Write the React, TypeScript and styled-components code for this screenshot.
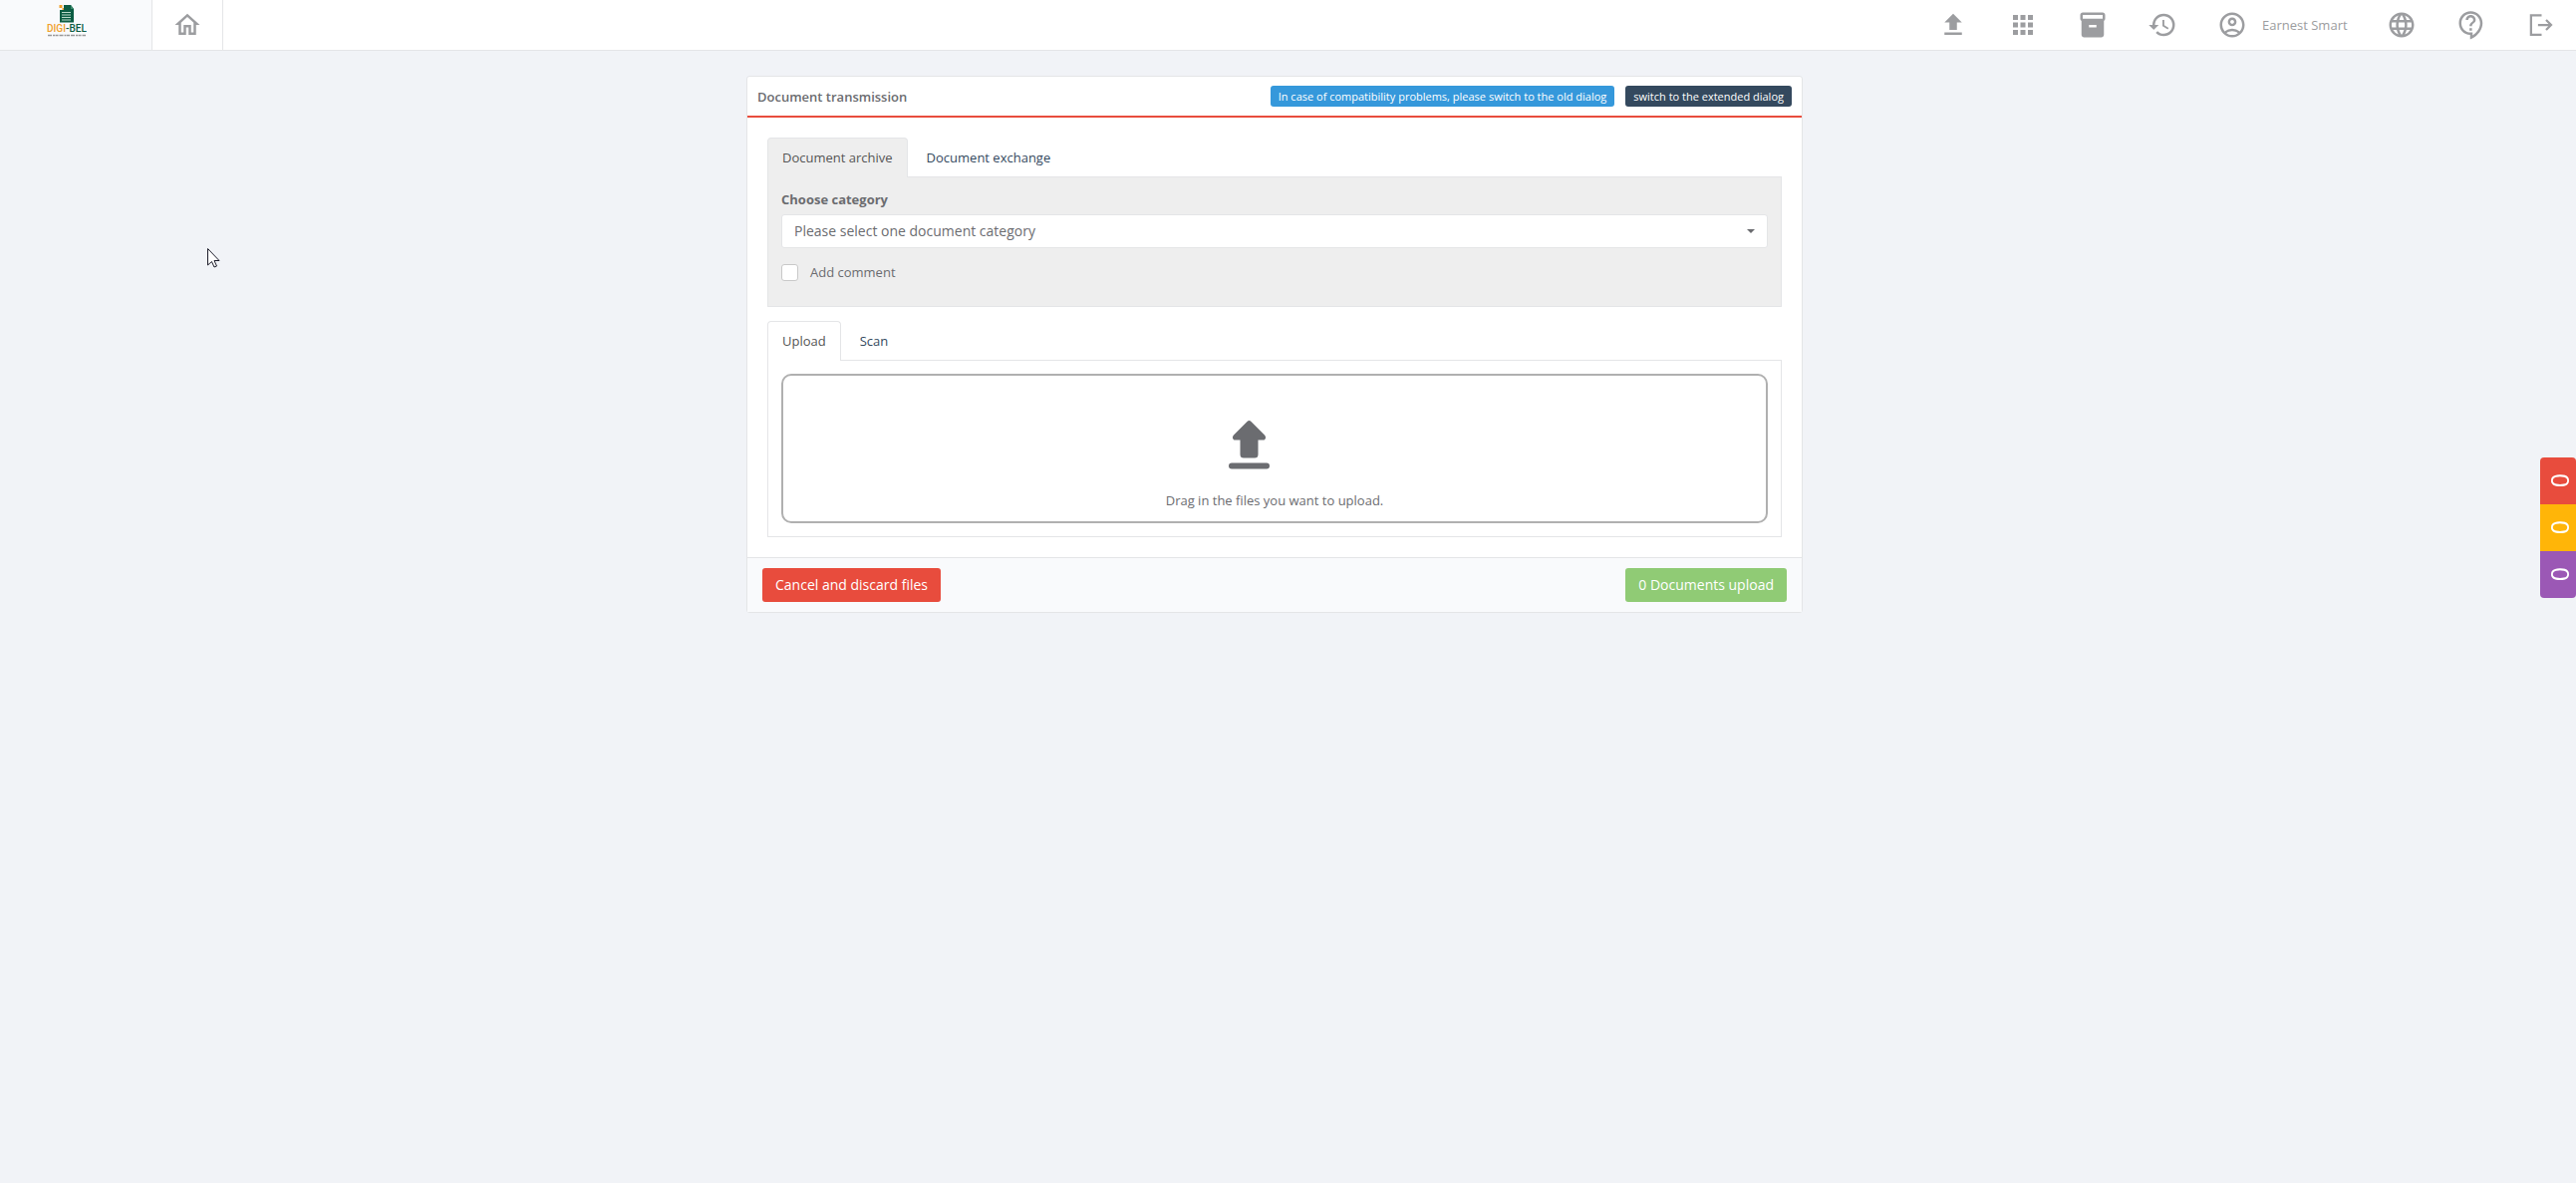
import React, { useState } from "react";
import styled, { createGlobalStyle, css } from "styled-components";
import {
  MdOutlineHome,
  MdUpload,
  MdApps,
  MdInventory2,
  MdHistory,
  MdOutlineAccountCircle,
  MdLanguage,
  MdOutlineContactSupport,
} from "react-icons/md";

const GlobalStyle = createGlobalStyle`
  *, *::before, *::after { box-sizing: border-box; }
  body {
    margin: 0;
    min-height: 100vh;
    background: #f1f3f7;
    color: #6b6c70;
    font: 13px/20px "Open Sans", "Noto Sans", sans-serif;
  }
  button, input, select { font: inherit; color: inherit; }
`;

const line = "#e4e5e7";

const TopBar = styled.header`
  display: flex;
  justify-content: space-between;
  height: 51px;
  background: #fff;
  border-bottom: 1px solid ${line};
`;

const BarGroup = styled.nav`
  display: flex;
`;

const LogoLink = styled.a`
  display: flex;
  justify-content: center;
  width: 153px;
  padding-right: 18px;
  background: #f9fafc;
  border-right: 1px solid ${line};
`;

const BarButton = styled.button<{ $divided?: boolean; $wide?: boolean }>`
  display: flex;
  align-items: center;
  gap: 15px;
  width: ${(p) => (p.$wide ? 170 : p.$divided ? 71 : 70)}px;
  padding: 0 20px;
  border: 0;
  border-right: ${(p) => (p.$divided ? `1px solid ${line}` : "0")};
  background: none;
  color: #9c9da0;
  white-space: nowrap;
  cursor: pointer;

  svg {
    flex: none;
    width: 30px;
    height: 30px;
  }
`;

const Main = styled.main`
  display: flex;
  justify-content: center;
  padding: 25px 27px 25px 0;
`;

const Card = styled.section`
  width: 100%;
  max-width: 1060px;
  background: #fff;
  border: 1px solid ${line};
  border-radius: 3px;
`;

const CardHeader = styled.header`
  display: flex;
  align-items: center;
  justify-content: space-between;
  height: 41px;
  padding: 0 10px;
  border-bottom: 2px solid #e84c3d;
`;

const Title = styled.h1`
  margin: 0;
  font-size: 13px;
  font-weight: 600;
`;

const HeaderActions = styled.div`
  display: flex;
  gap: 11px;
`;

const SmallButton = styled.button<{ $color: string }>`
  height: 21px;
  padding: 0 8px;
  border: 0;
  border-radius: 3px;
  background: ${(p) => p.$color};
  color: #fff;
  font-size: 11px;
  line-height: 20px;
  cursor: pointer;
`;

const CardBody = styled.div`
  display: flex;
  flex-direction: column;
  gap: 14px;
  padding: 20px;
`;

const TabList = styled.div`
  display: flex;
  gap: 4px;
`;

const Tab = styled.button<{ $active: boolean; $fill: string }>`
  height: 40px;
  margin-bottom: -1px;
  padding: 0 14px 2px;
  border: 1px solid transparent;
  border-bottom: 0;
  border-radius: 4px 4px 0 0;
  background: none;
  color: #34495e;
  cursor: pointer;

  ${(p) =>
    p.$active &&
    css`
      background: ${p.$fill};
      border-color: ${line};
      color: #555;
    `}
`;

const TabPanel = styled.div<{ $fill: string }>`
  display: flex;
  flex-direction: column;
  padding: 13px;
  background: ${(p) => p.$fill};
  border: 1px solid ${line};
`;

const FieldLabel = styled.label`
  padding-bottom: 6px;
  font-weight: 700;
  line-height: 18px;
`;

const SelectBox = styled.div`
  display: grid;
  align-items: center;

  > * {
    grid-area: 1 / 1;
  }

  svg {
    justify-self: end;
    margin-right: 13px;
    pointer-events: none;
  }
`;

const Select = styled.select`
  appearance: none;
  width: 100%;
  height: 34px;
  padding: 0 12px;
  border: 1px solid ${line};
  border-radius: 3px;
  background: #fff;
  font-size: 14px;
`;

const CheckRow = styled.label`
  display: flex;
  align-items: center;
  gap: 12px;
  margin: 14px 0 11px;
`;

const CheckBox = styled.input`
  appearance: none;
  width: 17px;
  height: 17px;
  margin: 0;
  border: 1px solid #c9c9c9;
  border-radius: 3px;
  background: #fff;

  &:checked {
    background: #6b6c70;
  }
`;

const DropZone = styled.div`
  display: flex;
  flex-direction: column;
  align-items: center;
  gap: 21px;
  padding: 45px 20px 11px;
  border: 2px solid #b0b0b0;
  border-radius: 10px;
  background: #fff;

  svg {
    margin-right: 51px;
  }
`;

const CardFooter = styled.footer`
  display: flex;
  justify-content: space-between;
  padding: 10px 15px;
  border-top: 1px solid ${line};
  background: #f9fafc;
`;

const ActionButton = styled.button<{ $color: string }>`
  height: 34px;
  padding: 0 13px;
  border: 0;
  border-radius: 3px;
  background: ${(p) => p.$color};
  color: #fff;
  font-size: 14px;
  cursor: pointer;
`;

const Rail = styled.aside`
  position: fixed;
  top: 459px;
  right: 0;
  display: flex;
  flex-direction: column;
  width: 36px;
  border-radius: 4px;
  overflow: hidden;
`;

const RailButton = styled.button<{ $color: string }>`
  display: flex;
  align-items: center;
  justify-content: center;
  height: 47px;
  padding: 0 0 0 5px;
  border: 0;
  background: ${(p) => p.$color};
  color: #fff;
  font-size: 25px;
  line-height: 36px;
  cursor: pointer;

  span {
    writing-mode: vertical-rl;
  }
`;

const Logo = () => (
  <svg width="40" height="50" viewBox="0 0 40 50" aria-hidden="true">
    <path d="M17 5h7l3 4v13.500H13V10h4z" fill="#0c5c43" />
    <path d="M24 5v4h3z" fill="#3c8a6c" />
    <path d="M12.500 5h3v3h-3zM15.500 8h1.500v2h-1.500z" fill="#f0a02c" />
    <path d="M15 12.500h9M15 15h9M15 17.500h9M15 20h9" stroke="#b9d8c9" />
    <text x="0" y="32" fontFamily="Roboto, sans-serif" fontSize="10" fontWeight="500" fill="#f0a02c">
      DIGI<tspan fill="#0c5c43">-BEL</tspan>
    </text>
    <path d="M1 35.500h38" stroke="#999" strokeWidth="1.500" strokeDasharray="4 1 2 .5 3 1" />
  </svg>
);

const ExitIcon = () => (
  <svg viewBox="0 0 24 24" fill="none" stroke="currentColor" strokeWidth="1.8" aria-hidden="true">
    <path d="M12.400 4.200H3.900v15.600h8.500M9.500 12H20M16 8l4 4-4 4" />
  </svg>
);

const UploadArrow = () => (
  <svg width="41" height="49" viewBox="0 0 41 49" fill="#6b6c70" aria-hidden="true">
    <path d="M18.500 1a3 3 0 0 1 4 0L36 14.500c2 2 1 5-1.500 5H29.500V34a3.500 3.500 0 0 1-3.500 3.500H15a3.500 3.500 0 0 1-3.500-3.500V19.500H6.500c-2.500 0-3.500-3-1.500-5z" />
    <rect y="42.500" width="41" height="6" rx="3" />
  </svg>
);

const Caret = () => (
  <svg width="8" height="4" viewBox="0 0 8 4" fill="#6b6c70" aria-hidden="true">
    <path d="M0 0h8L4 4z" />
  </svg>
);

const Pointer = styled.svg`
  position: absolute;
  top: 249px;
  left: 208px;
  pointer-events: none;
`;

interface TabsProps {
  labels: string[];
  fill: string;
  children: React.ReactNode;
}

const Tabs = ({ labels, fill, children }: TabsProps) => {
  const [active, setActive] = useState(0);
  return (
    <div>
      <TabList role="tablist">
        {labels.map((label, i) => (
          <Tab
            key={label}
            role="tab"
            aria-selected={i === active}
            $active={i === active}
            $fill={fill}
            onClick={() => setActive(i)}
          >
            {label}
          </Tab>
        ))}
      </TabList>
      <TabPanel role="tabpanel" $fill={fill}>
        {children}
      </TabPanel>
    </div>
  );
};

export default function App() {
  return (
    <>
      <GlobalStyle />
      <TopBar>
        <BarGroup>
          <LogoLink href="#" aria-label="DIGI-BEL">
            <Logo />
          </LogoLink>
          <BarButton $divided aria-label="Home"><MdOutlineHome /></BarButton>
        </BarGroup>
        <BarGroup>
          <BarButton aria-label="Upload"><MdUpload /></BarButton>
          <BarButton aria-label="Apps"><MdApps /></BarButton>
          <BarButton aria-label="Archive"><MdInventory2 /></BarButton>
          <BarButton aria-label="History"><MdHistory /></BarButton>
          <BarButton $wide><MdOutlineAccountCircle />Earnest Smart</BarButton>
          <BarButton aria-label="Language"><MdLanguage /></BarButton>
          <BarButton aria-label="Help"><MdOutlineContactSupport /></BarButton>
          <BarButton aria-label="Log out"><ExitIcon /></BarButton>
        </BarGroup>
      </TopBar>
      <Main>
        <Card>
          <CardHeader>
            <Title>Document transmission</Title>
            <HeaderActions>
              <SmallButton $color="#3598db">
                In case of compatibility problems, please switch to the old dialog
              </SmallButton>
              <SmallButton $color="#34495e">switch to the extended dialog</SmallButton>
            </HeaderActions>
          </CardHeader>
          <CardBody>
            <Tabs labels={["Document archive", "Document exchange"]} fill="#eee">
              <FieldLabel htmlFor="category">Choose category</FieldLabel>
              <SelectBox>
                <Select id="category">
                  <option>Please select one document category</option>
                </Select>
                <Caret />
              </SelectBox>
              <CheckRow>
                <CheckBox type="checkbox" />
                Add comment
              </CheckRow>
            </Tabs>
            <Tabs labels={["Upload", "Scan"]} fill="#fff">
              <DropZone>
                <UploadArrow />
                <span>Drag in the files you want to upload.</span>
              </DropZone>
            </Tabs>
          </CardBody>
          <CardFooter>
            <ActionButton $color="#e84c3d">Cancel and discard files</ActionButton>
            <ActionButton $color="#90cb75">0 Documents upload</ActionButton>
          </CardFooter>
        </Card>
      </Main>
      <Rail>
        <RailButton $color="#e84c3d"><span>0</span></RailButton>
        <RailButton $color="#ffb508"><span>0</span></RailButton>
        <RailButton $color="#9b58b5"><span>0</span></RailButton>
      </Rail>
      <Pointer width="13" height="20" viewBox="0 0 13 20" aria-hidden="true">
        <path
          d="M.5.5v16.500l4-3.500 2.500 5.500 2.500-1L7 12.500h5z"
          fill="#fff"
          stroke="#1c1c2a"
        />
      </Pointer>
    </>
  );
}
